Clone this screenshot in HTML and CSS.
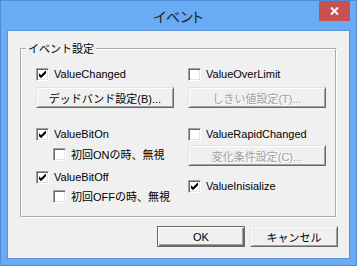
FILE: index.html
```html
<!DOCTYPE html>
<html lang="ja">
<head>
    <meta charset="UTF-8">
    <meta name="viewport" content="width=device-width, initial-scale=1.0">
    <title>イベント</title>
    <link rel="stylesheet" href="styles.css">
</head>
<body>
    <div class="window">
        <div class="titlebar">
            <span></span>
            <span class="title">イベント</span>
            <button class="close" title="閉じる">
                <svg width="9" height="8" viewBox="0 0 9 8"><path d="M1 0.5 L8 7.5 M8 0.5 L1 7.5" stroke="#fff" stroke-width="2"/></svg>
            </button>
        </div>

        <div class="client">
            <fieldset class="group">
                <legend>イベント設定</legend>
                <div class="columns">
                    <div class="col">
                        <label class="check"><span class="box"><svg width="7" height="7" viewBox="0 0 7 7"><path d="M0 2.2 L2 4.2 L7 -0.8 L7 2.2 L2 7.2 L0 5.2 Z"/></svg></span>ValueChanged</label>
                        <button class="btn wide mt-5">デッドバンド設定(B)...</button>
                        <label class="check mt-18"><span class="box"><svg width="7" height="7" viewBox="0 0 7 7"><path d="M0 2.2 L2 4.2 L7 -0.8 L7 2.2 L2 7.2 L0 5.2 Z"/></svg></span>ValueBitOn</label>
                        <label class="check sub mt-4"><span class="box"></span>初回ONの時、無視</label>
                        <label class="check mt-7"><span class="box"><svg width="7" height="7" viewBox="0 0 7 7"><path d="M0 2.2 L2 4.2 L7 -0.8 L7 2.2 L2 7.2 L0 5.2 Z"/></svg></span>ValueBitOff</label>
                        <label class="check sub mt-3"><span class="box"></span>初回OFFの時、無視</label>
                    </div>
                    <div class="col">
                        <label class="check"><span class="box"></span>ValueOverLimit</label>
                        <button class="btn wide mt-5" disabled>しきい値設定(T)...</button>
                        <label class="check mt-18"><span class="box"></span>ValueRapidChanged</label>
                        <button class="btn wide mt-3" disabled>変化条件設定(C)...</button>
                        <label class="check mt-12"><span class="box"><svg width="7" height="7" viewBox="0 0 7 7"><path d="M0 2.2 L2 4.2 L7 -0.8 L7 2.2 L2 7.2 L0 5.2 Z"/></svg></span>ValueInisialize</label>
                    </div>
                </div>
            </fieldset>

            <div class="footer">
                <button class="btn action default">OK</button>
                <button class="btn action">キャンセル</button>
            </div>
        </div>
    </div>
</body>
</html>
```

FILE: styles.css
```css
* {
    box-sizing: border-box;
}
html, body {
    margin: 0;
}
body {
    width: 357px;
    height: 266px;
    font-family: "Liberation Sans", "Noto Sans CJK JP", sans-serif;
    font-size: 11px;
    color: #000;
}
.window {
    width: 357px;
    height: 266px;
    display: flex;
    flex-direction: column;
    background: #6aabf5;
    border: 1px solid #4f8bd6;
    padding: 0 6px 6px;
}
.titlebar {
    height: 29px;
    flex: none;
    display: grid;
    grid-template-columns: 1fr auto 1fr;
    align-items: start;
}
.title {
    font-family: "Noto Sans CJK JP", sans-serif;
    font-size: 14px;
    font-feature-settings: "palt";
    line-height: 20px;
    padding-top: 5px;
    color: #222;
}
.close {
    justify-self: end;
    width: 31px;
    height: 20px;
    border: 0;
    padding: 0;
    background: #c75050;
    display: flex;
    align-items: center;
    justify-content: center;
}
.client {
    flex: 1;
    background: #f0f0f0;
    border: 1px solid #5b93d4;
    padding: 10px;
}
.group {
    margin: 0 2px;
    border: 2px groove #fff;
    padding: 9px 0 12px 14px;
    min-width: 0;
}
.group legend {
    margin-left: -10px;
    padding: 0 2px;
    line-height: 16px;
}
.columns {
    display: grid;
    grid-template-columns: 138px 138px;
    column-gap: 14px;
}
.col {
    display: flex;
    flex-direction: column;
    align-items: flex-start;
}
.check {
    display: flex;
    align-items: center;
    gap: 5px;
    height: 16px;
    white-space: nowrap;
}
.check.sub {
    margin-left: 17px;
}
.box {
    width: 13px;
    height: 13px;
    flex: none;
    background: #fff;
    border: 1px solid;
    border-color: #a0a0a0 #fff #fff #a0a0a0;
    box-shadow: inset 1px 1px 0 #696969, inset -1px -1px 0 #e3e3e3;
    display: flex;
    align-items: center;
    justify-content: center;
}
.mt-3 { margin-top: 3px; }
.mt-4 { margin-top: 4px; }
.mt-5 { margin-top: 5px; }
.mt-7 { margin-top: 7px; }
.mt-12 { margin-top: 12px; }
.mt-18 { margin-top: 18px; }
.btn {
    height: 21px;
    padding: 0;
    font: inherit;
    color: #000;
    background: #f0f0f0;
    border: 1px solid;
    border-color: #e3e3e3 #696969 #696969 #e3e3e3;
    box-shadow: inset 1px 1px 0 #fff, inset -1px -1px 0 #a0a0a0;
}
.btn.wide {
    width: 138px;
}
.btn:disabled {
    color: #a0a0a0;
    text-shadow: 1px 1px 0 #fff;
}
.btn.action {
    width: 88px;
}
.btn.default {
    border-color: #696969;
    box-shadow: inset 1px 1px 0 #fff, inset -1px -1px 0 #696969, inset -2px -2px 0 #a0a0a0;
}
.footer {
    display: flex;
    justify-content: flex-end;
    gap: 5px;
    margin: 8px 1px 0 0;
}
```
